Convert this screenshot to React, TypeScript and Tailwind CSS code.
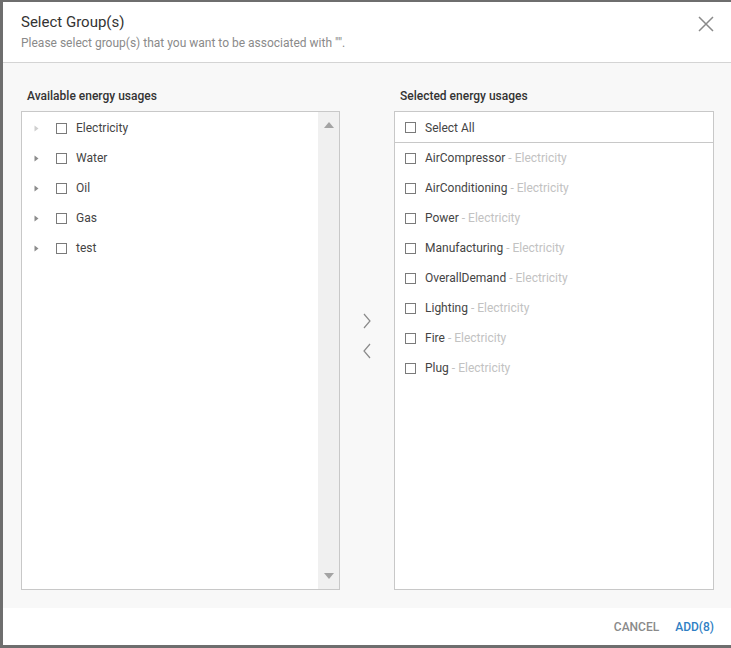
const available = ['Electricity', 'Water', 'Oil', 'Gas', 'test'];
const selected = [
  'AirCompressor',
  'AirConditioning',
  'Power',
  'Manufacturing',
  'OverallDemand',
  'Lighting',
  'Fire',
  'Plug',
];

function Box() {
  return <span className="inline-block w-[11px] h-[11px] border border-[#7a7a7a] bg-white shrink-0" />;
}

function Caret({ light }: { light?: boolean }) {
  return (
    <svg width="5" height="7" viewBox="0 0 5 7" className="shrink-0">
      <path d="M0.5 0.5 L4.5 3.5 L0.5 6.5 Z" fill={light ? '#cfcfcf' : '#8c8c8c'} />
    </svg>
  );
}

export default function App() {
  return (
    <div
      className="w-[731px] h-[648px] bg-[#6e6e6e] pt-[2px] pl-[3px] pb-[3px] overflow-hidden"
      style={{ fontFamily: 'Roboto, "Liberation Sans", sans-serif' }}
    >
      <div className="w-[728px] h-[643px] bg-white flex flex-col">
        {/* Header */}
        <div className="h-[61px] border-b border-[#d4d4d4] pl-[18px] pr-[18px] pt-[11px] flex justify-between shrink-0">
          <div>
            <h1 className="text-[15px] leading-[18px] text-[#333]">Select Group(s)</h1>
            <p className="text-[12px] leading-[14px] mt-[5px] text-[#8a8a8a]">
              Please select group(s) that you want to be associated with "".
            </p>
          </div>
          <svg width="16" height="16" viewBox="0 0 16 16" className="mt-[3px] mr-[-1px]">
            <path d="M1 1 L15 15 M15 1 L1 15" stroke="#8a8a8a" strokeWidth="1.5" />
          </svg>
        </div>

        {/* Body */}
        <div className="flex-1 bg-[#f8f8f8] pl-[18px] pr-[17px] pt-[25px] pb-[18px] grid grid-cols-[319px_54px_320px]">
          <div className="flex flex-col">
            <div className="text-[12px] leading-[16px] font-medium text-[#333] pl-[6px] mb-[7px]">Available energy usages</div>
            <div className="flex-1 border border-[#c8c8c8] bg-white flex">
              <div className="flex-1 pt-[1px]">
                {available.map((name, i) => (
                  <div key={name} className="h-[30px] flex items-center">
                    <span className="w-[34px] pl-[12px] flex">
                      <Caret light={i === 0} />
                    </span>
                    <Box />
                    <span className="ml-[9px] text-[12px] text-[#444]">{name}</span>
                  </div>
                ))}
              </div>
              <div className="w-[21px] bg-[#f0f0f0] flex flex-col justify-between items-center py-[10px]">
                <svg width="10" height="6" viewBox="0 0 10 6">
                  <path d="M0 6 L5 0 L10 6 Z" fill="#a3a3a3" />
                </svg>
                <svg width="10" height="6" viewBox="0 0 10 6">
                  <path d="M0 0 L5 6 L10 0 Z" fill="#a3a3a3" />
                </svg>
              </div>
            </div>
          </div>

          <div className="flex flex-col items-center justify-center gap-[14px] pb-[6px]">
            <svg width="10" height="16" viewBox="0 0 10 16">
              <path d="M2 1 L8 8 L2 15" stroke="#8a8a8a" strokeWidth="1.2" fill="none" />
            </svg>
            <svg width="10" height="16" viewBox="0 0 10 16">
              <path d="M8 1 L2 8 L8 15" stroke="#8a8a8a" strokeWidth="1.2" fill="none" />
            </svg>
          </div>

          <div className="flex flex-col">
            <div className="text-[12px] leading-[16px] font-medium text-[#333] pl-[6px] mb-[7px]">Selected energy usages</div>
            <div className="flex-1 border border-[#c8c8c8] bg-white">
              <div className="h-[31px] flex items-center pl-[10px] pt-[1px] border-b border-[#c8c8c8]">
                <Box />
                <span className="ml-[9px] text-[12px] text-[#444]">Select All</span>
              </div>
              {selected.map((name) => (
                <div key={name} className="h-[30px] flex items-center pl-[10px]">
                  <Box />
                  <span className="ml-[9px] text-[12px] text-[#444]">{name}</span>
                  <span className="ml-[3px] text-[12px] text-[#c2c2c2]">- Electricity</span>
                </div>
              ))}
            </div>
          </div>
        </div>

        {/* Footer */}
        <div className="h-[37px] shrink-0 flex items-center justify-end gap-[16px] pr-[17px] text-[12px] font-medium">
          <button className="text-[#8a8a8a]">CANCEL</button>
          <button className="text-[#2f7fc4]">ADD(8)</button>
        </div>
      </div>
    </div>
  );
}
